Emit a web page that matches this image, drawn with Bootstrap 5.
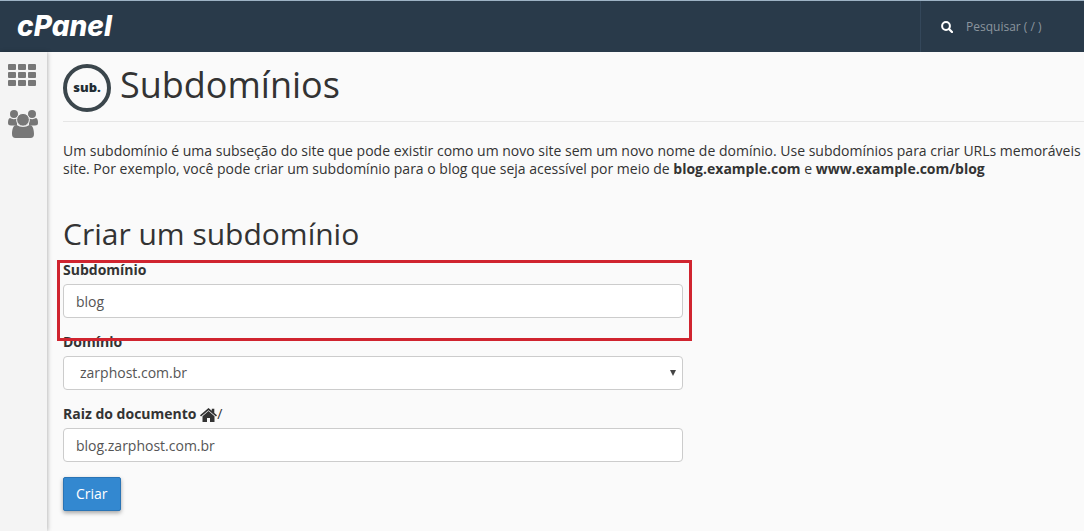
<!DOCTYPE html>
<html lang="pt-BR">
<head>
<meta charset="utf-8">
<meta name="viewport" content="width=device-width, initial-scale=1">
<title>cPanel - Subdomínios</title>
<link href="https://cdn.jsdelivr.net/npm/bootstrap@5.3.0/dist/css/bootstrap.min.css" rel="stylesheet">
<style>
  body { font-family: "Open Sans", "Noto Sans", sans-serif; font-size: 14px; line-height: 18px; color: #333; background: #fafafa; overflow-x: hidden; }
  .topbar { height: 52px; background: #293a4a; border-top: 1px solid #9db2c4; }
  .brand { font-family: Inter, "Open Sans", sans-serif; font-size: 28px; line-height: 50px; font-weight: 800; font-style: italic; color: #fff; padding-left: 17px; text-decoration: none; }
  .search { width: 164px; border-left: 1px solid #34475a; padding-left: 20px; gap: 13px; }
  .search input { width: 100%; min-width: 0; background: transparent; border: 0; outline: 0; padding: 0; color: #fff; font-size: 12px; }
  .search input::placeholder { color: #8b959e; opacity: 1; }
  .sidebar { width: 47px; padding: 12px 0 0 8px; background: #f4f4f4; box-shadow: 1px 0 4px rgba(0,0,0,.25); gap: 24px; }
  .sidebar a { line-height: 0; }
  .content { padding: 12px 0 16px 16px; }
  .page-title { font-size: 36px; line-height: 40px; font-weight: 400; gap: 9px; padding-bottom: 9px; margin: 0 0 20px; border-bottom: 1px solid #e6e6e6; }
  .page-title span { padding-bottom: 6px; }
  .title-icon { width: 48px; height: 48px; border: 4px solid #3b464c; border-radius: 50%; font-size: 13px; line-height: 38px; font-weight: 800; text-align: center; color: #222c33; }
  .intro { margin-bottom: 39px; white-space: nowrap; }
  h2 { font-size: 30px; line-height: 33px; font-weight: 400; margin-bottom: 11px; }
  .fields { max-width: 620px; }
  .field { margin-bottom: 15px; }
  .field label { display: block; height: 18px; margin-bottom: 5px; font-weight: 700; }
  .field .form-control, .field .form-select { height: 34px; padding: 6px 12px; font-size: 14px; line-height: 20px; color: #555; border: 1px solid #ccc; border-radius: 4px; }
  .field .form-select { padding-left: 16px; background-image: url("data:image/svg+xml,%3Csvg xmlns='http://www.w3.org/2000/svg' viewBox='0 0 6 6'%3E%3Cpath d='M0 0h6L3 6z' fill='%23444'/%3E%3C/svg%3E"); background-size: 6px 6px; background-position: right 6px center; }
  .marked::after { content: ""; position: absolute; inset: -1px -9px -23px -6px; border: 3px solid #d0242f; pointer-events: none; z-index: 2; }
  .btn-create { height: 34px; padding: 6px 12px; font-size: 14px; line-height: 20px; color: #fff; background: #3388d0; border: 1px solid #2a74b5; border-radius: 2px; box-shadow: 0 2px 4px rgba(0,0,0,.35); }
</style>
</head>
<body>
<div class="min-vh-100 d-flex flex-column">
  <header class="topbar d-flex justify-content-between">
    <a class="brand" href="#">cPanel</a>
    <label class="search d-flex align-items-center">
      <svg class="flex-shrink-0" width="12" height="12" viewBox="0 0 12 12" fill="none" stroke="#fff" aria-hidden="true"><circle cx="5" cy="5" r="3.9" stroke-width="2"/><path d="M8 8l3 3" stroke-width="2.3" stroke-linecap="round"/></svg>
      <input type="text" placeholder="Pesquisar ( / )" aria-label="Pesquisar">
    </label>
  </header>
  <div class="d-flex flex-grow-1">
    <nav class="sidebar d-flex flex-column flex-shrink-0" aria-label="Menu">
      <a href="#" aria-label="Início"><svg width="28" height="22" viewBox="0 0 28 22" fill="#777"><rect width="8" height="6" rx="1"/><rect x="10" width="8" height="6" rx="1"/><rect x="20" width="8" height="6" rx="1"/><rect y="8" width="8" height="6" rx="1"/><rect x="10" y="8" width="8" height="6" rx="1"/><rect x="20" y="8" width="8" height="6" rx="1"/><rect y="16" width="8" height="6" rx="1"/><rect x="10" y="16" width="8" height="6" rx="1"/><rect x="20" y="16" width="8" height="6" rx="1"/></svg></a>
      <a href="#" aria-label="Gerenciador de usuários"><svg width="30" height="28" viewBox="0 0 30 28" fill="#777"><circle cx="6" cy="4" r="4"/><circle cx="24" cy="4" r="4"/><path d="M2 8Q5 10 9 8.500V15.500H3Q0 15.500 0 13Q0 8.500 2 8zM28 8Q25 10 21 8.500V15.500H27Q30 15.500 30 13Q30 8.500 28 8z"/><circle cx="15" cy="9.800" r="6.400" stroke="#f4f4f4"/><path d="M8.500 15Q15 19 21.500 15C25 15 26 20 26 24Q26 28 22.500 28H7.500Q4 28 4 24C4 20 5 15 8.500 15z"/></svg></a>
    </nav>
    <main class="content flex-grow-1">
      <h1 class="page-title d-flex align-items-center"><i class="title-icon fst-normal flex-shrink-0">sub.</i><span>Subdomínios</span></h1>
      <p class="intro">Um subdomínio é uma subseção do site que pode existir como um novo site sem um novo nome de domínio. Use subdomínios para criar URLs memoráveis<br>site. Por exemplo, você pode criar um subdomínio para o blog que seja acessível por meio de <b>blog.example.com</b> e <b>www.example.com/blog</b></p>
      <h2>Criar um subdomínio</h2>
      <form class="fields">
        <div class="field marked position-relative">
          <label for="sub">Subdomínio</label>
          <input class="form-control" id="sub" type="text" value="blog">
        </div>
        <div class="field">
          <label for="domain">Domínio</label>
          <select class="form-select" id="domain"><option>zarphost.com.br</option></select>
        </div>
        <div class="field">
          <label for="root">Raiz do documento <svg width="17" height="14" viewBox="0 0 17 14" fill="#333" aria-hidden="true"><path d="M8.500 0L0 7.300l1 1.300L8.500 2.200 16 8.600l1-1.300-2.700-2.300V.7h-2.500v2.100zM8.500 3L2.500 8.200V14H7v-4h3v4h4.500V8.200z"/></svg><span class="fw-normal">/</span></label>
          <input class="form-control" id="root" type="text" value="blog.zarphost.com.br">
        </div>
        <button class="btn btn-create" type="button">Criar</button>
      </form>
    </main>
  </div>
</div>
<script src="https://cdn.jsdelivr.net/npm/bootstrap@5.3.0/dist/js/bootstrap.bundle.min.js"></script>
</body>
</html>
